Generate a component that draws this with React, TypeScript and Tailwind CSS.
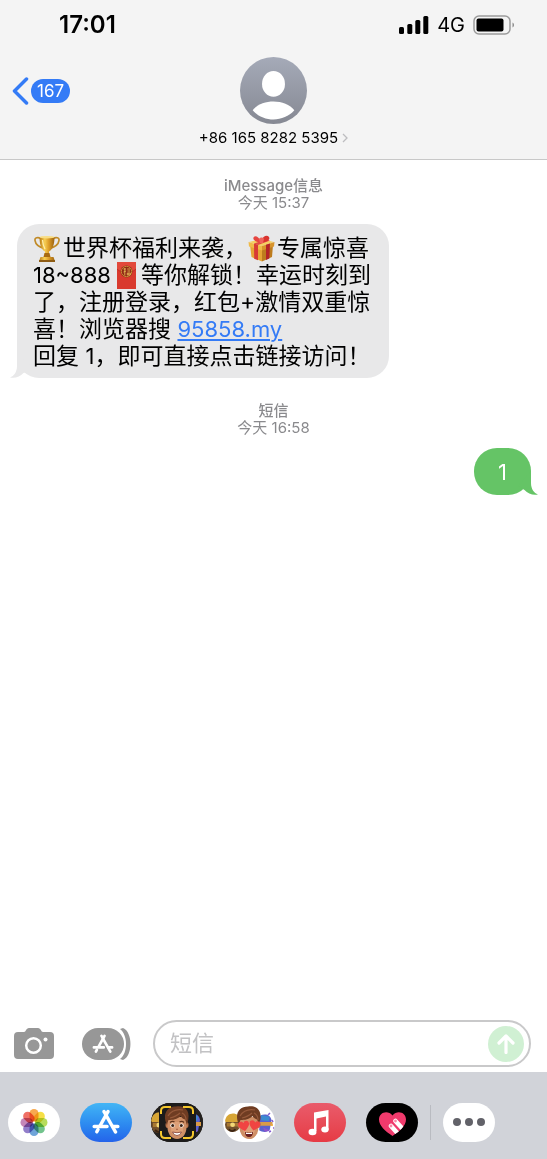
import React, { useState } from "react";

const Trophy = () => (
  <svg
    className="inline-block h-[27px] w-[30px] align-top"
    viewBox="0 0 30 27"
    role="img"
    aria-label="奖杯"
  >
    <defs>
      <linearGradient id="gold" x1="0" x2="1" y1="0" y2="0">
        <stop offset="0" stopColor="#b87a14" />
        <stop offset="0.35" stopColor="#f7cf55" />
        <stop offset="0.6" stopColor="#dfa02a" />
        <stop offset="1" stopColor="#9c6210" />
      </linearGradient>
    </defs>
    <path
      d="M8 3.5C5 2 1.5 2.5 2 5.5c.6 4 4 6.500 9 8M20 3.500c3-1.500 6.500-1 6 2-.6 4-4 6.500-9 8"
      fill="none"
      stroke="#c08a26"
      strokeWidth="1.600"
    />
    <path d="M6.500 2h15c0 8-2 12.500-5.500 14.500v4h-4v-4C8.500 14.500 6.500 10 6.500 2z" fill="url(#gold)" />
    <ellipse cx="14" cy="2.200" rx="7.500" ry="1.300" fill="#f8dd84" />
    <path d="M9.500 5c.3 4 1 6.500 2.500 9" fill="none" stroke="#fff0ad" strokeWidth="1.300" />
    <path d="M11.500 18h5l1 4h-7z" fill="#a86b12" />
    <path d="M7.500 22h13l1.500 4.500H6z" fill="url(#gold)" />
    <path d="M6 25h16v2H6z" fill="#8e5c14" />
  </svg>
);

const Gift = () => (
  <svg
    className="inline-block h-[27px] w-[30px] align-top"
    viewBox="0 0 30 27"
    role="img"
    aria-label="礼物"
  >
    <path d="M2 7l12-3 13 3-12 4z" fill="#f5cf62" />
    <path d="M3 10l12 3v13.500L4.500 22z" fill="#e6a536" />
    <path d="M26 10l-11 3v13.500L25 22z" fill="#bd7c1e" />
    <path d="M1.500 7L15 11v4.500L2 11.500z" fill="#f0ba49" />
    <path d="M27.500 7L15 11v4.500l12-4z" fill="#d8942c" />
    <path d="M7 8.500l4 1.300v15.500l-3.800-1.600z" fill="#d83a35" />
    <path d="M19 9.700l4-1.300-.7 15-3.300 1.600z" fill="#b52528" />
    <path d="M7 8.500l12-4 4 1-12 4.500z" fill="#e14a42" />
    <path d="M14 6C11 1 8 0 6.500 2.500 5.500 5 9 7 14 7.500z" fill="#e64540" />
    <path d="M14 6c2-5 6-6.500 8-4 1.500 3-2 5-8 5.500z" fill="#d9342f" />
    <path d="M12 4c1-2 4-2 5 0l-1 4h-3z" fill="#f0635a" />
  </svg>
);

const RedEnvelope = () => (
  <svg
    className="inline-block h-[27px] w-[30px] align-top"
    viewBox="0 0 30 27"
    role="img"
    aria-label="红包"
  >
    <path d="M6 0h19v27H6z" fill="#d93a2e" />
    <path d="M6 0h19v7c-5 5-14 5-19 0z" fill="#e2493b" />
    <path d="M6 7c5 5 14 5 19 0" fill="none" stroke="#b82a22" strokeWidth="0.800" />
    <circle cx="15.500" cy="9.500" r="6" fill="#8f2a16" />
    <circle cx="15.500" cy="9.500" r="5.200" fill="none" stroke="#c58b35" strokeWidth="1" />
    <path
      d="M12.500 7h2.500M13.800 6v7.500M12.500 10l2.600-1M16.200 7h3M16.500 9h2.600M16.300 11h3v2h-3zM17.800 11v2"
      fill="none"
      stroke="#e4b455"
      strokeWidth="0.900"
    />
  </svg>
);

const AppStoreGlyph = ({ className }: { className?: string }) => (
  <svg className={className} viewBox="0 0 28 26" fill="none" stroke="currentColor" aria-hidden="true">
    <path d="M12 2.500l11.500 20.500" strokeWidth="3.500" strokeLinecap="round" />
    <path d="M16 2.500L8.500 16" strokeWidth="3.500" strokeLinecap="round" />
    <path d="M6 20.500L4.800 22.800" strokeWidth="3.500" strokeLinecap="round" />
    <path d="M2.200 17.500H15M21 17.500h4.800" strokeWidth="3.500" strokeLinecap="round" />
  </svg>
);

const petals = [
  { angle: 0, color: "#f7a03c" },
  { angle: 45, color: "#f5dc32" },
  { angle: 90, color: "#b0d84a" },
  { angle: 135, color: "#62bd80" },
  { angle: 180, color: "#5f9ad5" },
  { angle: 225, color: "#8670c4" },
  { angle: 270, color: "#c07ab0" },
  { angle: 315, color: "#ee6055" },
];

const PhotosIcon = () => (
  <svg className="h-full w-full" viewBox="0 0 52 39" aria-hidden="true">
    <g className="isolate">
      {petals.map(({ angle, color }) => (
        <rect
          key={angle}
          x="21.500"
          y="6"
          width="9"
          height="12.500"
          rx="4.500"
          fill={color}
          opacity="0.900"
          transform={`rotate(${angle} 26 19.500)`}
          className="mix-blend-multiply"
        />
      ))}
    </g>
  </svg>
);

const Friends = () => (
  <>
    <circle cx="8" cy="22" r="8" fill="#72502c" />
    <path d="M0 18c1-11 15-12 17 0l-2 1H1z" fill="#d7a536" />
    <path d="M2 20h12v4H2z" fill="#a87832" />
    <circle cx="8" cy="22" r="2.500" fill="#f2d878" />
    <path d="M4 27q4 4 7 0" fill="none" stroke="#3b2413" strokeWidth="2" />
    <path d="M37 12c5-3 11-1 12 5l-2 11c-4 3-8 2-11 0z" fill="#5b61cf" />
    <path d="M37 19h13v4H37z" fill="#d99b48" />
    <path d="M38 11l9 2-1 5-8-1z" fill="#3c8bd0" />
    <path d="M40 25l7 3-5 2z" fill="#8e55cb" />
  </>
);

const Face = () => (
  <>
    <ellipse cx="16.500" cy="22" rx="2" ry="3" fill="#b9734c" />
    <ellipse cx="35.500" cy="22" rx="2" ry="3" fill="#b9734c" />
    <path d="M16.500 14h19v10c0 7-4 12-9.500 12s-9.500-5-9.500-12z" fill="#cf8f66" />
    <path d="M20 19h12v7c0 4-3 7-6 7s-6-3-6-7z" fill="#dda078" />
    <path
      d="M16 22C11 11 16 3.500 25 3.500 35 2 40 9 36.500 20L36 22c-1-2-1-4-2-5.500-2-.5-3.500-2-4.500-3.500-3 3.500-8 4-12 4-.8 1.500-1 3-1.500 5z"
      fill="#6f3c22"
    />
    <path
      d="M17 13c3-5 9-7 15-6M19 15c4-1 8-3 10-5M31 10c2 1 4 4 4 7"
      fill="none"
      stroke="#96593a"
      strokeWidth="1.200"
    />
  </>
);

const MemojiCameraIcon = () => (
  <svg className="h-full w-full" viewBox="0 0 52 39" aria-hidden="true">
    <path d="M0 0h52v39H0z" fill="#24211f" />
    <Friends />
    <path d="M8 0h37v39H8z" fill="#1c1b1b" />
    <Face />
    <path d="M19 19.500q2.500-2 4.500-.5M28.500 19q2.500-1.500 4.500.5" fill="none" stroke="#60341d" strokeWidth="1.200" />
    <ellipse cx="21.500" cy="22.500" rx="2.200" ry="1.900" fill="#fff" />
    <ellipse cx="30.500" cy="22.500" rx="2.200" ry="1.900" fill="#fff" />
    <circle cx="21.700" cy="22.500" r="1.500" fill="#3a2418" />
    <circle cx="30.300" cy="22.500" r="1.500" fill="#3a2418" />
    <path d="M25 26q1 1 2 0" fill="none" stroke="#a65f3d" strokeWidth="1" />
    <path d="M21.500 29q4.500 1.500 9 0-1 3.500-4.500 3.500T21.500 29z" fill="#fff" stroke="#803b31" strokeWidth="0.800" />
    <path
      d="M10 11V8q0-4 4-4h6M32 4h6q4 0 4 4v3M42 28v3q0 4-4 4h-6M20 35h-6q-4 0-4-4v-3"
      fill="none"
      stroke="#f5c72e"
      strokeWidth="2"
    />
  </svg>
);

const MemojiStickerIcon = () => (
  <svg className="h-full w-full" viewBox="0 0 52 39" aria-hidden="true">
    <g transform="translate(2 2) scale(.95 .9)">
      <Friends />
    </g>
    <path d="M45 12l2-2M49 17l1 2M46 29l2-1M50 25h1" stroke="#865dd0" strokeWidth="1.500" />
    <circle cx="49" cy="22" r="1" fill="#f0ad3b" />
    <Face />
    <path
      d="M0 5C-4 2-5.500 0-5.500-2-5.500-5-1.500-6 0-3 1.500-6 5.500-5 5.500-2 5.500 0 4 2 0 5z"
      fill="#f04442"
      transform="translate(21 23) rotate(-12)"
    />
    <path
      d="M0 5C-4 2-5.500 0-5.500-2-5.500-5-1.500-6 0-3 1.500-6 5.500-5 5.500-2 5.500 0 4 2 0 5z"
      fill="#f04442"
      transform="translate(31.500 22.500) rotate(12)"
    />
    <path d="M22 29q4 1.500 8 0 0 5-4 5t-4-5z" fill="#6b2020" />
    <path d="M23 29.500q3 1 6 0V31h-6z" fill="#fff" />
  </svg>
);

const MusicIcon = () => (
  <svg className="h-full w-full" viewBox="0 0 52 39" fill="#fff" aria-hidden="true">
    <path d="M20 9.500L34.500 7v19.500H32V13.500l-9.500 2V28H20z" />
    <ellipse cx="18.500" cy="29" rx="4" ry="3.200" />
    <ellipse cx="31" cy="26.500" rx="3.700" ry="3" />
  </svg>
);

const DigitalTouchIcon = () => (
  <svg className="h-full w-full" viewBox="0 0 52 39" aria-hidden="true">
    <defs>
      <clipPath id="heart">
        <path d="M26.500 33C19 28 13 22.500 13 16.500 13 9 22 6.500 26.500 12.500 31 6.500 40 9 40 16.500c0 6-6 11.500-13.500 16.500z" />
      </clipPath>
    </defs>
    <g clipPath="url(#heart)">
      <path d="M12 8h29v26H12z" fill="#f03a6c" />
      <path d="M25 23l9 10M29.500 18l10 11" stroke="#fff" strokeWidth="4.500" strokeLinecap="round" />
      <circle cx="25" cy="23" r="1.400" fill="#f78ba9" />
      <circle cx="29.500" cy="18" r="1.400" fill="#f78ba9" />
    </g>
  </svg>
);

const StatusBar = () => (
  <div className="flex h-[50px] items-center justify-between pr-8 pl-[59px]">
    <span className="text-[24px] leading-7 font-semibold">17:01</span>
    <div className="flex items-center gap-2">
      <svg className="h-[18px] w-[30px]" viewBox="0 0 30 18" aria-hidden="true">
        <rect x="0" y="11" width="5" height="7" rx="1.500" />
        <rect x="8.300" y="8" width="5" height="10" rx="1.500" />
        <rect x="16.300" y="4" width="5" height="14" rx="1.500" />
        <rect x="24.300" y="0" width="5" height="18" rx="1.500" />
      </svg>
      <span className="text-[20px] leading-7">4G</span>
      <svg className="h-5 w-[42px]" viewBox="0 0 42 20" aria-hidden="true">
        <rect x="1" y="1" width="36" height="18" rx="5" fill="none" stroke="#9b9b9b" strokeWidth="1.500" />
        <rect x="3.500" y="3.500" width="27" height="13" rx="2" />
        <path d="M39.500 7.500c2 .8 2 4.200 0 5z" fill="#8c8c8c" />
      </svg>
    </div>
  </div>
);

const Timestamp = ({ kind, time }: { kind: string; time: string }) => (
  <p className="text-center text-[15px] leading-[17px] text-[#8a8a8d]">
    <span className="font-medium">{kind}</span>
    <br />
    今天 {time}
  </p>
);

const apps = [
  { label: "照片", className: "bg-white", icon: <PhotosIcon /> },
  {
    label: "App Store",
    className: "bg-linear-to-b from-[#43b5f5] to-[#2563ea] text-white",
    icon: <AppStoreGlyph className="h-[26px] w-7" />,
  },
  { label: "拟我表情", className: "bg-[#24211f]", icon: <MemojiCameraIcon /> },
  { label: "拟我表情贴纸", className: "bg-white", icon: <MemojiStickerIcon /> },
  {
    label: "音乐",
    className: "bg-linear-to-b from-[#e95b6b] to-[#e63a44]",
    icon: <MusicIcon />,
  },
  { label: "Digital Touch", className: "bg-black", icon: <DigitalTouchIcon /> },
];

export default function App() {
  const [message, setMessage] = useState("");

  return (
    <div className="flex min-h-screen flex-col bg-white font-['Inter','Noto_Sans_CJK_SC',sans-serif] text-black">
      <header className="border-b border-[#c8c8c8] bg-[#f4f4f4]">
        <StatusBar />
        <div className="grid h-[109px] grid-cols-[1fr_auto_1fr] pt-[7px]">
          <button className="flex h-[67px] items-center gap-[2px] justify-self-start pl-3">
            <svg className="h-7 w-[17px]" viewBox="0 0 17 28" aria-hidden="true">
              <path
                d="M14.500 2L2.500 14l12 12"
                fill="none"
                stroke="#347bf6"
                strokeWidth="3.500"
                strokeLinecap="round"
                strokeLinejoin="round"
              />
            </svg>
            <span className="rounded-full bg-[#347bf6] px-[6px] text-[17px] leading-6 text-white">167</span>
          </button>

          {/* Contact */}
          <button className="flex flex-col items-center gap-1">
            <svg className="h-[67px] w-[67px]" viewBox="0 0 66 66" aria-hidden="true">
              <defs>
                <linearGradient id="avatar" x1="0" x2="0" y1="0" y2="1">
                  <stop offset="0" stopColor="#a5aab8" />
                  <stop offset="1" stopColor="#868993" />
                </linearGradient>
              </defs>
              <circle cx="33" cy="33" r="33" fill="url(#avatar)" />
              <ellipse cx="33" cy="26.500" rx="11.300" ry="12.700" fill="#fff" />
              <path d="M12.500 52.500C21 41 45 41 53.500 52.500 43 64.500 23 64.500 12.500 52.500z" fill="#fff" />
            </svg>
            <span className="flex items-center gap-1 text-[15px] leading-5">
              +86 165 8282 5395
              <svg className="h-[10px] w-[6px]" viewBox="0 0 6 10" aria-hidden="true">
                <path d="M1 1l4 4-4 4" fill="none" stroke="#bdbdc0" strokeWidth="1.300" />
              </svg>
            </span>
          </button>
        </div>
      </header>

      <main className="flex flex-1 flex-col pt-[17px]">
        <Timestamp kind="iMessage信息" time="15:37" />

        <div className="relative mt-[13px] mb-6 ml-[17px] self-start rounded-[22px] bg-[#e8e8e9] pt-[11px] pr-[18px] pb-2 pl-4">
          <svg className="absolute bottom-0 -left-2 h-6 w-[26px]" viewBox="0 0 26 24" aria-hidden="true">
            <path d="M8 0v12c0 6-3 10-7 11.500 5 1 10-.5 13.500-4.500L26 15z" fill="#e8e8e9" />
          </svg>
          <p className="relative text-[23px] leading-[27px]">
            <Trophy />
            世界杯福利来袭，
            <Gift />
            专属惊喜
            <br />
            <span className="text-[22px]">18~888</span>
            <RedEnvelope />
            等你解锁！幸运时刻到
            <br />
            了，注册登录，红包+激情双重惊
            <br />
            喜！浏览器搜{" "}
            <a
              href="#"
              className="text-[22px] text-[#347bf6] underline decoration-[#347bf6] decoration-2 underline-offset-2"
            >
              95858.my
            </a>
            <br />
            回复 <span className="text-[22px]">1</span>，即可直接点击链接访问！
          </p>
        </div>

        <Timestamp kind="短信" time="16:58" />

        <div className="relative mt-3 mr-4 self-end rounded-[23px] bg-[#65c466] px-6 pt-[11px] pb-[9px] text-white">
          <svg className="absolute -right-[7px] bottom-0 h-6 w-[26px]" viewBox="0 0 26 24" aria-hidden="true">
            <path d="M19 0v12c0 6 3 10 7 11.500-5 1-10-.5-13.500-4.500L6 15z" fill="#65c466" />
          </svg>
          <p className="relative text-[22px] leading-[27px]">1</p>
        </div>
      </main>

      <form
        className="flex items-center pt-3 pr-4 pb-[5px] pl-[14px]"
        onSubmit={(e) => e.preventDefault()}
      >
        <button type="button" aria-label="相机">
          <svg className="h-8 w-10" viewBox="0 0 40 32" aria-hidden="true">
            <path
              d="M4 4h6c2 0 2-4 5-4h9c3 0 3 4 5 4h7q4 0 4 4v19q0 4-4 4H4q-4 0-4-4V8q0-4 4-4z"
              fill="#979797"
            />
            <circle cx="19.500" cy="17.500" r="7.300" fill="none" stroke="#fff" strokeWidth="2.500" />
            <circle cx="31.500" cy="11.500" r="2" fill="#fff" />
          </svg>
        </button>
        <button type="button" aria-label="App" className="ml-7 flex items-center">
          <span className="flex h-8 w-[42px] items-center justify-center rounded-full bg-[#979797] text-white">
            <AppStoreGlyph className="h-5 w-[22px]" />
          </span>
          <svg className="h-8 w-[7px] overflow-visible" viewBox="0 0 7 32" aria-hidden="true">
            <path d="M-4 1C4 7 4 25-4 31l3 1C9 28 9 4-1 0z" fill="#979797" />
          </svg>
        </button>
        <div className="ml-[22px] flex h-[47px] min-w-0 flex-1 items-center rounded-full border-2 border-[#c9c9ca] pr-[5px] pl-[15px]">
          <input
            type="text"
            aria-label="短信"
            placeholder="短信"
            value={message}
            onChange={(e) => setMessage(e.target.value)}
            className="min-w-0 flex-1 bg-transparent text-[22px] leading-[27px] outline-none placeholder:text-[#c2c2c4]"
          />
          <button
            type="submit"
            aria-label="发送"
            className="flex h-9 w-9 items-center justify-center rounded-full bg-[#d0f0d3]"
          >
            <svg className="h-5 w-[18px]" viewBox="0 0 18 20" aria-hidden="true">
              <path
                d="M9 18.500V2M2 9l7-7 7 7"
                fill="none"
                stroke="#fff"
                strokeWidth="3.200"
                strokeLinecap="round"
                strokeLinejoin="round"
              />
            </svg>
          </button>
        </div>
      </form>

      <nav className="flex h-[87px] items-center bg-[#d1d3d9] pt-[13px] pl-2" aria-label="App">
        <div className="flex w-[76%] justify-between">
          {apps.map((app) => (
            <button
              key={app.label}
              aria-label={app.label}
              className={`flex h-[39px] w-[52px] items-center justify-center overflow-hidden rounded-full ${app.className}`}
            >
              {app.icon}
            </button>
          ))}
        </div>
        <span className="mx-3 h-[35px] w-px bg-[#b9bbc1]" />
        <button
          aria-label="更多"
          className="flex h-[39px] w-[52px] items-center justify-center gap-1 rounded-full bg-white"
        >
          <span className="size-2 rounded-full bg-[#626269]" />
          <span className="size-2 rounded-full bg-[#626269]" />
          <span className="size-2 rounded-full bg-[#626269]" />
        </button>
      </nav>
    </div>
  );
}
